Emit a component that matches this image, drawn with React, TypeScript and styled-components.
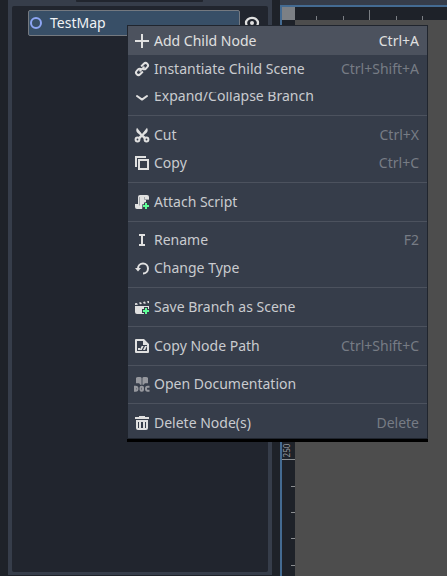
import React from 'react';
import styled, { createGlobalStyle } from 'styled-components';

const Global = createGlobalStyle`
  * { box-sizing: border-box; }
  body { margin: 0; overflow: hidden; background: #1e2229; font-family: "Noto Sans", sans-serif; }
`;

const Editor = styled.div`
  position: relative;
  display: flex;
  gap: 8px;
  width: 447px;
  height: 576px;
  padding-left: 8px;
  overflow: hidden;
  background: #1e2229;
`;

const Dock = styled.aside`
  width: 264px;
  height: 575px;
  padding: 0 4px 3px;
  background: #363d4a;
`;

const DockTab = styled.div`
  width: 127px;
  height: 2px;
  margin: 0 0 4px 64px;
  border-radius: 0 0 1px 1px;
  background: #21252e;
`;

const Tree = styled.div`
  height: 566px;
  padding: 4px 0 0 16px;
  border-radius: 2px;
  background: #21252e;
`;

const TreeRow = styled.div`
  display: flex;
  gap: 4px;
`;

const TreeItem = styled.div`
  display: flex;
  align-items: center;
  gap: 6px;
  width: 212px;
  height: 26px;
  padding-left: 1px;
  border: 1px solid #747980;
  border-radius: 2px;
  background: #384f67;
  color: #f0f2f4;
  font-size: 14px;
  line-height: 24px;
`;

const ViewportPane = styled.main`
  display: flex;
  flex-direction: column;
  flex: 1;
  border-top: 5px solid #363d4a;
`;

const ViewportFrame = styled.div`
  display: grid;
  grid-template: 13px 1fr / 13px 1fr;
  flex: 1;
  border: solid #446b92;
  border-width: 2px 0 0 2px;
`;

const RulerCorner = styled.div`
  background: #7c8085;
`;

const RulerStrip = styled.svg`
  display: block;
  overflow: visible;
  background: #1e2229;
`;

const Canvas = styled.div`
  background: #4d4d4d;
`;

const Menu = styled.div`
  position: absolute;
  left: 127px;
  top: 25px;
  width: 301px;
  height: 417px;
  border: 1px solid #20252e;
  border-bottom: 0;
  background: #363d4a;
`;

const Item = styled.div<{ $active?: boolean; $height: number; $top?: number; $bottom?: number }>`
  display: grid;
  grid-template-columns: 20px 1fr auto;
  align-items: center;
  height: ${p => p.$height}px;
  padding: ${p => p.$top ?? 0}px 8px ${p => p.$bottom ?? 0}px 6px;
  background: ${p => (p.$active ? '#4c525e' : 'transparent')};
  color: ${p => (p.$active ? '#e0e0e0' : '#c9cbcf')};
  font-size: 14px;
  line-height: 20px;
  white-space: nowrap;
`;

const Label = styled.span<{ $clip?: boolean }>`
  clip-path: ${p => (p.$clip ? 'inset(6px 0 0 0)' : 'none')};
`;

const Shortcut = styled.span<{ $active?: boolean }>`
  color: ${p => (p.$active ? '#e0e0e0' : '#777c85')};
`;

const Separator = styled.div`
  height: 1px;
  background: #4c525e;
`;

const MenuFoot = styled.div`
  height: 4px;
  margin: 0 -1px;
  border-top: 1px solid #20252e;
  background: #000;
`;

const Glyph = styled.svg`
  display: block;
  width: 16px;
  height: 16px;
`;

const c = '#e0e0e0';

const icons = {
  add: <path fill={c} d="M7 1h2v6h6v2H9v6H7V9H1V7h6z" />,
  link: (
    <g fill="none" stroke={c} strokeWidth="2" transform="rotate(-45 8 8)">
      <path d="M6.8 10.4H3A2.4 2.4 0 0 1 3 5.6h1.8A2.4 2.4 0 0 1 7.2 8" />
      <path d="M9.2 5.6H13a2.4 2.4 0 0 1 0 4.8h-1.8A2.4 2.4 0 0 1 8.8 8" />
      <path d="M4.5 8h7" strokeWidth="1.7" />
    </g>
  ),
  expand: <path d="m3 8 5 3.6L13 8" fill="none" stroke={c} strokeWidth="2" strokeLinecap="round" strokeLinejoin="round" />,
  cut: (
    <g fill="none" stroke={c} strokeWidth="2">
      <circle cx="3.5" cy="12.5" r="1.9" />
      <circle cx="12.5" cy="12.5" r="1.9" />
      <path fill={c} stroke="none" d="M3 .8C1.8 3 2.2 5 3.6 6.1L6.3 8.3 4 10.4l1.8 1.8L8 10l2.2 2.2 1.8-1.8-2.3-2.1 2.7-2.2C13.8 5 14.2 3 13 .8L8 7z" />
    </g>
  ),
  copy: <path fill={c} d="M1 1v11h2V3h9V1zm3 3v11h11V4zm2 2h7v7H6z" />,
  script: (
    <g>
      <path fill={c} d="M6 1a2 2 0 0 0-2 2v7H1v3a2 2 0 0 0 2 2h5a3 3 0 0 0 2-2V9h2V6h3V3a2 2 0 0 0-2-2z" />
      <path fill="none" stroke="#92959b" strokeWidth=".8" d="M5.5 3v8.5M10.5 3v2.5H15" />
      <path fill="#363d4a" d="M10.3 8.3h3.4v2h2.3V16H8.3v-5.7h2z" />
      <path fill="#5fff97" d="M11 9h2v2h2v2h-2v2h-2v-2H9v-2h2z" />
    </g>
  ),
  rename: <path fill={c} d="M5 2v2h2v8H5v2h6v-2H9V4h2V2z" />,
  reload: (
    <g>
      <path d="M4 8.5a5 5 0 1 1 5 5" fill="none" stroke={c} strokeWidth="2" />
      <path fill={c} d="M1 8h6l-3 3.6z" />
    </g>
  ),
  scene: (
    <g>
      <path fill={c} d="M1 7h14v6a2 2 0 0 1-2 2H3a2 2 0 0 1-2-2zM1 4.2l2-.3.9 1.8-2.9.4zM5 3.5l2-.3.9 1.8-2 .3zM9 2.9l2-.3.9 1.8-2 .3zM13 2.3l2-.3v2.1l-1.1.1z" />
      <path fill="#363d4a" d="M10 8h4v2h2v6h-6v-2H8v-4h2z" />
      <path fill="#5fff97" d="M11 9h2v2h2v2h-2v2h-2v-2H9v-2h2z" />
    </g>
  ),
  path: (
    <g>
      <path fill={c} fillRule="evenodd" d="M2 1h8l5 5v8a1 1 0 0 1-1 1H2a1 1 0 0 1-1-1V2a1 1 0 0 1 1-1zm1 2v10h10V7H9V3z" />
      <path fill={c} d="M4 10h2v2H4zM7.7 8h2l-2 4h-2zM11 8h2l-2 4H9z" />
    </g>
  ),
  docs: (
    <g>
      <path fill="#96989e" d="M2 2q.5-1 2-1h2q1.3 0 1.6 1v5.2H2zM8.4 2q.3-1 1.6-1h2q1.5 0 2 1v5.2H8.4zM5 7h2.6v1.7H6.2zM8.4 7H11L9.8 8.7H8.4z" />
      <path fill="none" stroke="#96989e" strokeWidth="2" d="M1 10.8h.7q1.8 0 1.8 2t-1.8 2H1zM7.5 10.8h.5q1 0 1 1v2q0 1-1 1h-.5q-1 0-1-1v-2q0-1 1-1zM15.5 10.8h-2q-1.5 0-1.5 2t1.5 2h2" />
    </g>
  ),
  remove: <path fill={c} fillRule="evenodd" d="M5 1h6v1h4v2H1V2h4zM2 5h12v8a2 2 0 0 1-2 2H4a2 2 0 0 1-2-2zm2 2v6h1V7zm3 0v6h2V7zm4 0v6h1V7z" />,
};

type Entry = {
  icon: keyof typeof icons;
  label: string;
  keys?: string;
  h: number;
  top?: number;
  bottom?: number;
  active?: boolean;
  clip?: boolean;
};

const groups: Entry[][] = [
  [
    { icon: 'add', label: 'Add Child Node', keys: 'Ctrl+A', h: 29, active: true },
    { icon: 'link', label: 'Instantiate Child Scene', keys: 'Ctrl+Shift+A', h: 28 },
    { icon: 'expand', label: 'Expand/Collapse Branch', h: 32, bottom: 6, clip: true },
  ],
  [
    { icon: 'cut', label: 'Cut', keys: 'Ctrl+X', h: 33, top: 5 },
    { icon: 'copy', label: 'Copy', keys: 'Ctrl+C', h: 33, bottom: 6 },
  ],
  [{ icon: 'script', label: 'Attach Script', h: 38 }],
  [
    { icon: 'rename', label: 'Rename', keys: 'F2', h: 32, top: 3 },
    { icon: 'reload', label: 'Change Type', h: 33, bottom: 6 },
  ],
  [{ icon: 'scene', label: 'Save Branch as Scene', h: 38 }],
  [{ icon: 'path', label: 'Copy Node Path', keys: 'Ctrl+Shift+C', h: 38 }],
  [{ icon: 'docs', label: 'Open Documentation', h: 37, bottom: 2 }],
  [{ icon: 'remove', label: 'Delete Node(s)', keys: 'Delete', h: 34, top: 4 }],
];

export default function App() {
  return (
    <>
      <Global />
      <Editor>
        <Dock>
          <DockTab />
          <Tree>
            <TreeRow>
              <TreeItem>
                <svg width="14" height="14" viewBox="0 0 14 14">
                  <circle cx="6" cy="7" r="5" fill="none" stroke="#8da5f3" strokeWidth="2" />
                </svg>
                TestMap
              </TreeItem>
              <svg width="16" height="26" viewBox="0 0 16 26">
                <circle cx="8" cy="13" r="2" fill={c} />
                <path d="M2 13a6 5.2 0 0 1 12 0 6 5.2 0 0 1-12 0z" fill="none" stroke={c} strokeWidth="2.3" />
              </svg>
            </TreeRow>
          </Tree>
        </Dock>
        <ViewportPane>
          <ViewportFrame>
            <RulerCorner />
            <RulerStrip width="152" height="13">
              <path d="M21.5 9v4M48.5 9v4M74.5 3v10M101.5 9v4M127.5 9v4" stroke="#7b7f84" />
            </RulerStrip>
            <RulerStrip width="13" height="556">
              <path d="M0 439.5h13M9 466.5h4M9 492.5h4M9 518.5h4M9 545.5h4" stroke="#8b8e91" />
              <text transform="translate(8 437.5) rotate(-90)" fill="#9a9da1" fontSize="9" textLength="14" lengthAdjust="spacingAndGlyphs">250</text>
            </RulerStrip>
            <Canvas />
          </ViewportFrame>
        </ViewportPane>
        <Menu>
          {groups.map((group, i) => (
            <React.Fragment key={group[0].label}>
              {i > 0 && <Separator />}
              {group.map(entry => (
                <Item key={entry.label} $active={entry.active} $height={entry.h} $top={entry.top} $bottom={entry.bottom}>
                  <Glyph viewBox="0 0 16 16">{icons[entry.icon]}</Glyph>
                  <Label $clip={entry.clip}>{entry.label}</Label>
                  {entry.keys && <Shortcut $active={entry.active}>{entry.keys}</Shortcut>}
                </Item>
              ))}
            </React.Fragment>
          ))}
          <MenuFoot />
        </Menu>
      </Editor>
    </>
  );
}
